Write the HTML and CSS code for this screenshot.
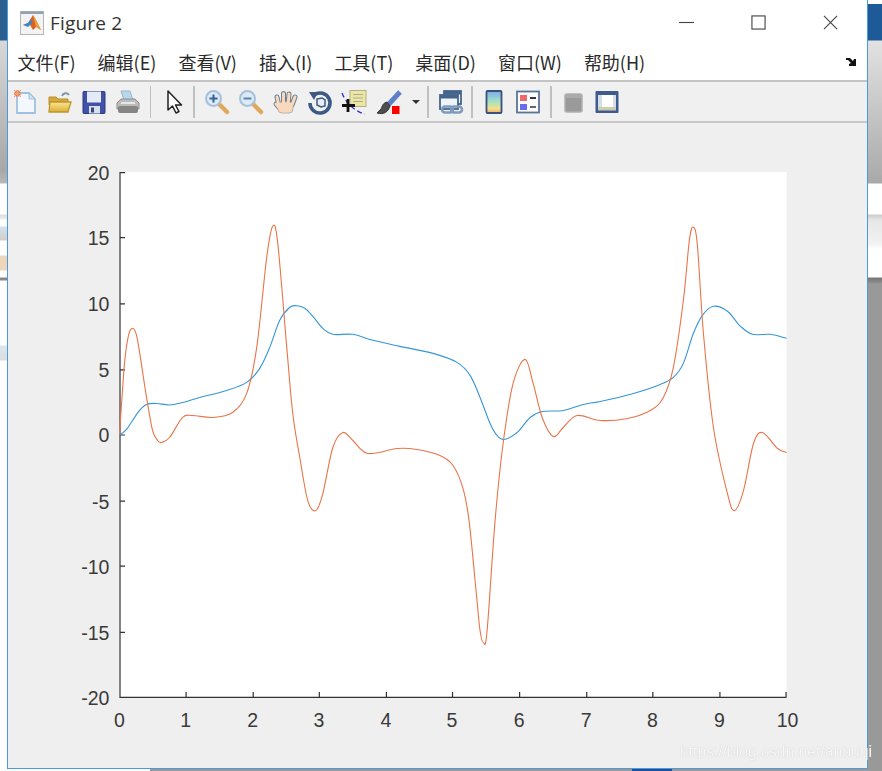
FILE: index.html
```html
<!DOCTYPE html>
<html lang="en">
<head>
  <meta charset="UTF-8" />
  <meta name="viewport" content="width=device-width, initial-scale=1.0" />
  <title>Figure 2</title>
  <link rel="stylesheet" href="styles.css">
</head>
<body>

  <div class="desktop-left"></div>
  <div class="desktop-right"></div>
  <div class="desktop-bottom"></div>

  <div class="window">
    <header class="title-bar">
      <svg class="app-icon" viewBox="0 0 24 24">
        <rect x="0.5" y="0.5" width="23" height="23" fill="#f3f3f3" stroke="#b5b5b5"/>
        <rect x="0.5" y="0.5" width="23" height="2.5" fill="#8fa3b5"/>
        <path d="M3 14l5-2 5-8 3 5 5 10-5-3-3 3-3-5z" fill="#d9622b"/>
        <path d="M3 14l5-2 3-4 1 4-4 4z" fill="#3b86c4"/>
        <path d="M13 4l3 5 5 10-5-3z" fill="#e8a33a"/>
      </svg>
      <span class="title-text">Figure 2</span>
      <div class="window-controls">
        <svg class="control" viewBox="0 0 16 16"><path d="M0 8h16" stroke="#444" stroke-width="1.2"/></svg>
        <svg class="control" viewBox="0 0 16 16"><rect x="1" y="1" width="14" height="14" fill="none" stroke="#444" stroke-width="1.2"/></svg>
        <svg class="control" viewBox="0 0 16 16"><path d="M1 1l14 14M15 1L1 15" stroke="#444" stroke-width="1.2"/></svg>
      </div>
    </header>

    <nav class="menu-bar">
      <span class="menu-item">文件(F)</span>
      <span class="menu-item">编辑(E)</span>
      <span class="menu-item">查看(V)</span>
      <span class="menu-item">插入(I)</span>
      <span class="menu-item">工具(T)</span>
      <span class="menu-item">桌面(D)</span>
      <span class="menu-item">窗口(W)</span>
      <span class="menu-item">帮助(H)</span>
      <svg class="dock-arrow" viewBox="0 0 12 10"><path d="M1 1l4 0 3 3 1-2 2 0 0 7-7 0 0-2 2-1-3-3-2 0z" fill="#111"/></svg>
    </nav>

    <div class="tool-bar">
      <div class="tool-group group-file">
        <svg class="tool" viewBox="0 0 24 24">
          <path d="M3 3h12l6 6v14H3z" fill="#f2f8fe" stroke="#9fc0e0" stroke-width="1.800"/>
          <path d="M15 3v6h6z" fill="#cfe1f2" stroke="#9fc0e0"/>
          <circle cx="3.500" cy="3.500" r="3.200" fill="#ee7f48"/>
          <path d="M0 0l7 7M7 0L0 7M3.500 0v7M0 3.500h7" stroke="#e9a07a"/>
        </svg>
        <svg class="tool" viewBox="0 0 24 24">
          <defs>
            <linearGradient id="folderFill" x1="0" y1="0" x2="0" y2="1">
              <stop offset="0" stop-color="#fbe690"/>
              <stop offset="1" stop-color="#dcae35"/>
            </linearGradient>
          </defs>
          <path d="M14 6c1-3 5-4 7-1" fill="none" stroke="#7f97ad" stroke-width="2"/>
          <path d="M1 7h7l2 2h10v6H1z" fill="#d6a93b" stroke="#b78f2e"/>
          <path d="M1 22l1-10h21l-3 10z" fill="url(#folderFill)" stroke="#bd9530" stroke-width="1.300"/>
        </svg>
        <svg class="tool" viewBox="0 0 24 24">
          <rect x="1" y="1.500" width="22" height="22" rx="1" fill="#4150a8" stroke="#2d3a7c"/>
          <rect x="5" y="1.500" width="14" height="11" fill="#e4ebf6"/>
          <rect x="7" y="16" width="11" height="7.500" fill="#d8dfec"/>
          <rect x="9" y="17.500" width="3" height="5" fill="#3a4880"/>
        </svg>
        <svg class="tool" viewBox="0 0 24 24">
          <path d="M5 1h9l3 9H8z" fill="#b6d8ee" stroke="#9bb4c6"/>
          <path d="M1 13l4-4h14l4 4v6H1z" fill="#bcbcbc" stroke="#8e8e8e"/>
          <rect x="2" y="16" width="20" height="7" rx="2" fill="#858585"/>
          <rect x="5" y="12" width="14" height="2" fill="#e6e6e6"/>
        </svg>
      </div>
      <span class="sep"></span>
      <div class="tool-group group-pointer">
        <svg class="tool" viewBox="0 0 24 24">
          <path d="M5 1v19l4.500-4 3.500 7 3-1.500-3.500-6.500h6z" fill="#fff" stroke="#222" stroke-width="1.500" stroke-linejoin="round"/>
        </svg>
      </div>
      <span class="sep"></span>
      <div class="tool-group group-nav">
        <svg class="tool" viewBox="0 0 24 24">
          <path d="M14 14l8 8" stroke="#e0a85a" stroke-width="4.500" stroke-linecap="round"/>
          <circle cx="8.500" cy="8.500" r="7.500" fill="#dbeaf5" stroke="#a4c0da" stroke-width="2"/>
          <path d="M4.500 8.500h8M8.500 4.500v8" stroke="#37609a" stroke-width="2"/>
        </svg>
        <svg class="tool" viewBox="0 0 24 24">
          <path d="M14 14l8 8" stroke="#e0a85a" stroke-width="4.500" stroke-linecap="round"/>
          <circle cx="8.500" cy="8.500" r="7.500" fill="#dbeaf5" stroke="#a4c0da" stroke-width="2"/>
          <path d="M4.500 8.500h8" stroke="#5a80ae" stroke-width="2"/>
        </svg>
        <svg class="tool" viewBox="0 0 24 24">
          <path d="M5 16L3 7M9.500 14V3.500M14 14l1-10M18 15l3-8M7 20L2 14" fill="none" stroke="#6c7f94" stroke-width="5" stroke-linecap="round"/>
          <rect x="4" y="12" width="15" height="11" rx="4" fill="#f8d9bd" stroke="#b9b1ab"/>
          <path d="M5 16L3 7M9.500 14V3.500M14 14l1-10M18 15l3-8M7 20L2 14" fill="none" stroke="#f8d9bd" stroke-width="3" stroke-linecap="round"/>
        </svg>
        <svg class="tool" viewBox="0 0 24 24">
          <path d="M6 5a10 10 0 1 1-4 8" fill="none" stroke="#3c5a84" stroke-width="3.600"/>
          <path d="M1 2l9 0-4 8z" fill="#3c5a84"/>
          <path d="M9 9l5-1 3 2v6l-4 1-4-2z" fill="#e8eef5" stroke="#3c5a84" stroke-width="1.500"/>
        </svg>
        <svg class="tool" viewBox="0 0 24 24">
          <path d="M-1 3c3 8 11 18 23 21" fill="none" stroke="#2b2bd9" stroke-width="1.300" stroke-dasharray="5 3"/>
          <rect x="7" y="0.500" width="16" height="16" fill="#ebe5a8" stroke="#b5ae7e"/>
          <path d="M10 4.500h10M10 8h10M10 11.500h10" stroke="#b3ad83" stroke-width="1.200"/>
          <path d="M5 9v13M-1 15.500h13" stroke="#111" stroke-width="2.800"/>
        </svg>
        <svg class="tool" viewBox="0 0 24 24">
          <path d="M23 2L11 15" stroke="#5f7fc8" stroke-width="5"/>
          <path d="M10 12c-5 1-5 6-6 7l-4 4c7 2 11-1 13-7z" fill="#4e4e4e" stroke="#333"/>
          <rect x="15" y="16" width="7.500" height="8" fill="#f00"/>
        </svg>
        <svg class="drop-arrow" viewBox="0 0 8 4"><path d="M0 0h8L4 4z" fill="#333"/></svg>
      </div>
      <span class="sep"></span>
      <div class="tool-group group-link">
        <svg class="tool" viewBox="0 0 24 24">
          <rect x="5" y="1" width="17" height="13" fill="#eef3f8" stroke="#45648a" stroke-width="1.800"/>
          <rect x="5" y="1" width="17" height="3.500" fill="#45648a"/>
          <rect x="1" y="5" width="18" height="14" fill="#eef3f8" stroke="#45648a" stroke-width="1.800"/>
          <rect x="1" y="5" width="18" height="3.500" fill="#45648a"/>
          <rect x="3" y="16.500" width="11" height="6" rx="3" fill="none" stroke="#7d9cbc" stroke-width="2.600"/>
          <rect x="12" y="16.500" width="11" height="6" rx="3" fill="none" stroke="#7d9cbc" stroke-width="2.600"/>
        </svg>
      </div>
      <span class="sep"></span>
      <div class="tool-group group-panels">
        <svg class="tool" viewBox="0 0 24 24">
          <defs>
            <linearGradient id="colorbarFill" x1="0" y1="0" x2="0" y2="1">
              <stop offset="0" stop-color="#7fa8e8"/>
              <stop offset=".45" stop-color="#9fe0c8"/>
              <stop offset=".8" stop-color="#f2e28c"/>
              <stop offset="1" stop-color="#f0a868"/>
            </linearGradient>
          </defs>
          <rect x="4.500" y="1" width="15" height="22" rx="1" fill="url(#colorbarFill)" stroke="#38507c" stroke-width="1.800"/>
        </svg>
        <svg class="tool" viewBox="0 0 24 24">
          <rect x="1" y="1.500" width="22" height="21" fill="#fbfbfb" stroke="#5a7498" stroke-width="1.800"/>
          <rect x="4" y="5" width="7" height="6" fill="#ee6a6a"/>
          <rect x="4" y="14" width="7" height="6" fill="#6a6aee"/>
          <path d="M14 8h6" stroke="#222" stroke-width="1.800"/>
          <path d="M14 17h6" stroke="#555" stroke-width="1.800"/>
        </svg>
      </div>
      <span class="sep"></span>
      <div class="tool-group group-plot">
        <svg class="tool" viewBox="0 0 24 24">
          <rect x="4" y="4" width="17" height="18" rx="2" fill="#9a9a9a" stroke="#b0b0b0" stroke-width="1.500"/>
          <rect x="5" y="5" width="15" height="3" fill="#ababab"/>
        </svg>
        <svg class="tool" viewBox="0 0 24 24">
          <rect x="0.500" y="1" width="23" height="22" rx="1" fill="#3f5a8c"/>
          <rect x="3" y="5" width="18" height="12" fill="#d5dde8"/>
          <rect x="7" y="5" width="11" height="12" fill="#fff"/>
          <rect x="3" y="17" width="18" height="3.500" fill="#cfcbb0"/>
        </svg>
      </div>
    </div>

    <main class="figure">
      <svg class="plot" viewBox="9 123 857 644">
        <rect x="120" y="172" width="666" height="524" fill="#fff"/>
        <path class="axis" d="M120.500 172V696.500H786M120.500 172.500h5M120.500 237.500h5M120.500 303.500h5M120.500 369.500h5M120.500 434.500h5M120.500 500.500h5M120.500 565.500h5M120.500 631.500h5M186.500 696v-5M253.500 696v-5M319.500 696v-5M386.500 696v-5M452.500 696v-5M519.500 696v-5M586.500 696v-5M652.500 696v-5M719.500 696v-5M785.500 696v-5"/>
        <path id="seriesBlue" class="series series-blue"/>
        <path id="seriesOrange" class="series series-orange"/>
        <g class="y-labels">
          <text x="110" y="180">20</text>
          <text x="110" y="245">15</text>
          <text x="110" y="311">10</text>
          <text x="110" y="377">5</text>
          <text x="110" y="442">0</text>
          <text x="110" y="508">-5</text>
          <text x="110" y="573">-10</text>
          <text x="110" y="639">-15</text>
          <text x="110" y="704">-20</text>
        </g>
        <g class="x-labels">
          <text x="120" y="726">0</text>
          <text x="186" y="726">1</text>
          <text x="253" y="726">2</text>
          <text x="319" y="726">3</text>
          <text x="386" y="726">4</text>
          <text x="452" y="726">5</text>
          <text x="519" y="726">6</text>
          <text x="586" y="726">7</text>
          <text x="652" y="726">8</text>
          <text x="719" y="726">9</text>
          <text x="787" y="726">10</text>
        </g>
      </svg>
    </main>

    <div class="watermark">https://blog.csdn.net/anbuqi</div>
  </div>

  <script src="script.js"></script>
</body>
</html>
```

FILE: styles.css
```css
/* Reset */
* {
  box-sizing: border-box;
  margin: 0;
  padding: 0;
}

html, body {
  height: 771px;
  overflow: hidden;
  background: #fff;
}

body {
  position: relative;
  font-family: "Open Sans", "Noto Sans CJK SC", sans-serif;
  color: #333;
}

/* Bits of the desktop showing around the window */
.desktop-left {
  position: absolute;
  top: 0;
  left: 0;
  width: 8px;
  height: 771px;
  background: linear-gradient(to bottom,
    #2a5f90 0, #2a5f90 40px,
    #d8d8d8 41px, #a8a8a8 170px, #b8b8b8 183px,
    #fff 184px, #fff 214px,
    #ddd 215px, #eee 219px, #fff 220px, #fff 226px,
    #d2e2f0 227px, #d4cdc6 240px, #fff 241px, #fff 255px,
    #eed6bb 256px, #eed6bb 270px, #fff 271px, #fff 277px,
    #888 278px, #888 280px, #fff 281px, #fff 345px,
    #dce6f0 346px, #dcdcdc 360px, #fff 361px);
}

.desktop-right {
  position: absolute;
  top: 4px;
  right: 0;
  width: 16px;
  height: 767px;
  background: linear-gradient(to bottom,
    #1f5a98 0, #1f5a98 36px,
    #e2e2e2 37px, #a9a9a9 179px,
    #fff 180px, #fff 210px,
    #ccc 211px, #e6e6e6 216px, #f2f2f2 240px, #fff 245px, #fff 273px,
    #777 274px, #888 278px, #999 280px);
}

.desktop-bottom {
  position: absolute;
  left: 150px;
  right: 0;
  bottom: 0;
  height: 4px;
  background: linear-gradient(to right,
    #999 0, #999 482px, #1f4f9c 482px, #1f4f9c 522px, #999 522px);
}

/* Window */
.window {
  position: relative;
  width: 861px;
  height: 769px;
  margin-left: 7px;
  display: flex;
  flex-direction: column;
  background: #fff;
  border-left: 1.5px solid #4a9bdd;
  border-right: 1.5px solid #4a9bdd;
  border-bottom: 1.5px solid #4a9bdd;
  filter: blur(0.45px);
}

.title-bar {
  height: 42px;
  display: flex;
  align-items: center;
  padding: 3px 0 0 12px;
}

.app-icon {
  width: 24px;
  height: 24px;
}

.title-text {
  margin-left: 6px;
  font-size: 19px;
  letter-spacing: 0.2px;
}

.window-controls {
  margin-left: auto;
  margin-right: 29px;
  display: flex;
  gap: 57px;
}

.control {
  width: 15px;
  height: 15px;
}

.menu-bar {
  height: 40px;
  display: flex;
  align-items: center;
  gap: 22px;
  padding: 2px 10px 0 9.500px;
  border-bottom: 2px solid #c4c4c4;
  font-family: "Noto Sans CJK SC", sans-serif;
  font-size: 18px;
  color: #2a2a2a;
  white-space: nowrap;
}

.dock-arrow {
  width: 12px;
  height: 10px;
  margin-left: auto;
}

.tool-bar {
  height: 41px;
  display: flex;
  align-items: center;
  padding-left: 5.500px;
  background: #f0f0f0;
  border-bottom: 2px solid #c8c8c8;
}

.tool-group {
  display: flex;
  align-items: center;
  gap: 10px;
}

.tool {
  width: 24px;
  height: 24px;
  flex: none;
  overflow: visible;
}

.drop-arrow {
  width: 8px;
  height: 4px;
}

.sep {
  width: 1.500px;
  height: 32px;
  background: #c0c0c0;
  flex: none;
}

.group-file { margin-right: 10px; }
.group-pointer { margin: 0 6.500px 0 11.500px; }
.group-nav { margin: 0 7px 0 10px; gap: 10.600px; }
.group-link { margin: 0 8px 0 10.500px; }
.group-panels { margin: 0 10px 0 9.500px; }
.group-plot { margin-left: 9.500px; }

/* Figure area */
.figure {
  flex: 1;
  background: #efefef;
  min-height: 0;
}

.plot {
  display: block;
  width: 100%;
  height: 100%;
}

.axis {
  fill: none;
  stroke: #333;
  stroke-width: 1.200;
}

.series {
  fill: none;
  stroke-width: 1.100;
  stroke-linejoin: round;
}

.series-blue { stroke: #3596d8; }
.series-orange { stroke: #e8754a; }

.y-labels text,
.x-labels text {
  font-family: "Liberation Sans", Arial, sans-serif;
  font-size: 19.500px;
  fill: #3a3a3a;
}

.y-labels text { text-anchor: end; }
.x-labels text { text-anchor: middle; }

.watermark {
  position: absolute;
  left: 672px;
  top: 743px;
  font-family: "Liberation Sans", Arial, sans-serif;
  font-size: 15.700px;
  white-space: nowrap;
  color: rgba(255, 255, 255, 0.85);
  text-shadow: 0 0 1px #bbb;
}
```

FILE: script.js
```js
// Curve points read off the plot, in page pixels
const bluePoints = [
  [120,435],[127,429],[133,420],[140,410],[147,404],[157,403],[170,404.500],[183,402],[200,397],[227,390],
  [247,382],[260,368],[270,347],[280,320],[290,307],[297,305.500],[305,308],[313,316],[323,328],[333,334],
  [353,334],[373,340],[400,346],[433,353],[457,362],[470,375],[480,397],[490,423],[497,435],[504,439],
  [517,432],[530,417],[542,411],[563,410],[583,404],[600,401],[633,393],[660,384],[673,377],[683,363],
  [693,333],[702,315],[713,306],[727,311],[740,326],[752,334],[770,334],[786,338]
];

const orangePoints = [
  [120,434],[125,363],[129,335],[133,328],[137,335],[141,358],[147,397],[153,430],[158,440],[162,442],
  [170,437],[183,417],[193,415],[213,417],[233,412],[247,393],[257,347],[267,257],[273,226],[278,243],
  [287,347],[293,413],[300,457],[308,500],[316,510],[323,493],[333,447],[343,432],[353,440],[368,453],
  [397,448],[417,449],[440,455],[453,465],[463,488],[469,520],[476,590],[480,630],[483.500,642],[487,630],
  [495,520],[503,443],[513,383],[525,359],[533,383],[542,417],[553,436],[563,427],[577,415],[600,420],
  [627,418],[650,410],[663,397],[673,367],[683,300],[689,240],[693,227],[697,245],[703,333],[713,427],
  [727,493],[734,510],[743,490],[753,443],[762,432],[777,448],[786,452]
];

// Catmull-Rom through the points, written out as cubic beziers
function smoothPath(pts) {
  let d = `M${pts[0][0]} ${pts[0][1]}`;
  for (let i = 0; i < pts.length - 1; i++) {
    const p0 = pts[i - 1] || pts[i];
    const p1 = pts[i];
    const p2 = pts[i + 1];
    const p3 = pts[i + 2] || p2;
    const c1x = p1[0] + (p2[0] - p0[0]) / 6;
    const c1y = p1[1] + (p2[1] - p0[1]) / 6;
    const c2x = p2[0] - (p3[0] - p1[0]) / 6;
    const c2y = p2[1] - (p3[1] - p1[1]) / 6;
    d += `C${c1x} ${c1y} ${c2x} ${c2y} ${p2[0]} ${p2[1]}`;
  }
  return d;
}

document.getElementById('seriesBlue').setAttribute('d', smoothPath(bluePoints));
document.getElementById('seriesOrange').setAttribute('d', smoothPath(orangePoints));
```
